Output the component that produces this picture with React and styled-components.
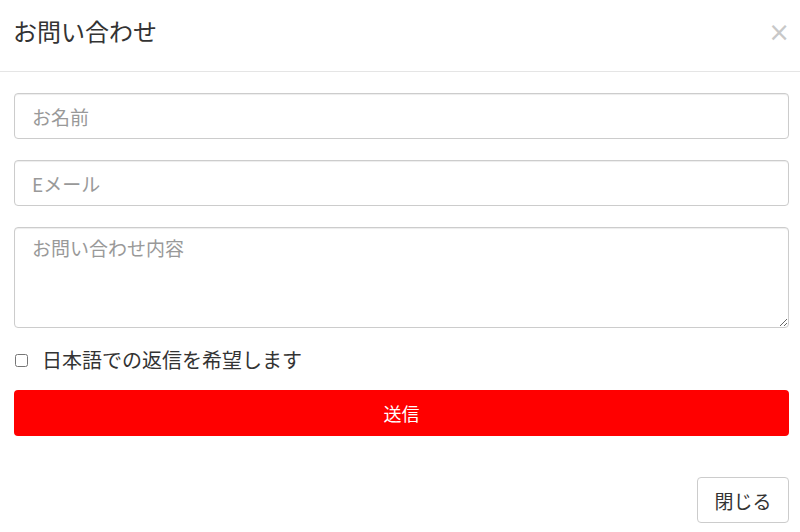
import React from 'react'
import styled, { createGlobalStyle } from 'styled-components'

const GlobalStyle = createGlobalStyle`
  html, body {
    margin: 0;
    padding: 0;
    background: #fff;
  }
  body {
    font-family: "Noto Sans CJK JP", "Noto Sans", sans-serif;
    color: #333;
  }
`

const Modal = styled.div`
  width: 800px;
  height: 532px;
  display: flex;
  flex-direction: column;
  box-sizing: border-box;
`

const Header = styled.div`
  height: 72px;
  box-sizing: border-box;
  display: flex;
  align-items: center;
  justify-content: space-between;
  padding: 0 10px 8px 13px;
  border-bottom: 1px solid #e5e5e5;
`

const Title = styled.h4`
  margin: 0;
  font-size: 24px;
  font-weight: 400;
  line-height: 1.2;
  color: #333;
`

const CloseX = styled.button`
  border: none;
  background: none;
  padding: 0;
  font-family: "DejaVu Sans", sans-serif;
  font-size: 26px;
  line-height: 1;
  color: #c8c8c8;
  cursor: pointer;
`

const Body = styled.form`
  display: flex;
  flex-direction: column;
  gap: 21px;
  padding: 21px 11px 0 14px;
`

const Field = styled.input`
  height: 46px;
  box-sizing: border-box;
  border: 1px solid #ccc;
  border-radius: 4px;
  padding: 0 17px;
  font-family: inherit;
  font-size: 19px;
  color: #555;
  box-shadow: inset 0 1px 1px rgba(0, 0, 0, 0.075);
  &::placeholder {
    color: #999;
  }
`

const Area = styled.textarea`
  height: 101px;
  box-sizing: border-box;
  border: 1px solid #ccc;
  border-radius: 4px;
  padding: 6px 17px;
  font-family: inherit;
  font-size: 19px;
  color: #555;
  box-shadow: inset 0 1px 1px rgba(0, 0, 0, 0.075);
  &::placeholder {
    color: #999;
  }
`

const CheckRow = styled.label`
  display: flex;
  align-items: center;
  gap: 14px;
  height: 26px;
  line-height: 26px;
  margin-top: -2px;
  font-size: 20px;
  color: #333;
`

const Check = styled.input`
  margin: 0 0 0 1px;
  width: 13px;
  height: 13px;
`

const Submit = styled.button`
  height: 46px;
  margin-top: -4px;
  border: none;
  border-radius: 4px;
  background: #ff0000;
  color: #fff;
  font-family: inherit;
  font-size: 18px;
  cursor: pointer;
`

const Footer = styled.div`
  margin-top: auto;
  display: flex;
  justify-content: flex-end;
  padding: 0 11px 9px 14px;
`

const Plain = styled.button`
  width: 92px;
  height: 46px;
  border: 1px solid #ccc;
  border-radius: 4px;
  background: #fff;
  color: #333;
  font-family: inherit;
  font-size: 19px;
  cursor: pointer;
`

const App = () => {
  return (
    <>
      <GlobalStyle />
      <Modal>
        <Header>
          <Title>お問い合わせ</Title>
          <CloseX type="button">×</CloseX>
        </Header>
        <Body onSubmit={e => e.preventDefault()}>
          <Field type="text" placeholder="お名前" />
          <Field type="email" placeholder="Eメール" />
          <Area placeholder="お問い合わせ内容" />
          <CheckRow>
            <Check type="checkbox" />
            日本語での返信を希望します
          </CheckRow>
          <Submit type="submit">送信</Submit>
        </Body>
        <Footer>
          <Plain type="button">閉じる</Plain>
        </Footer>
      </Modal>
    </>
  )
}

export default App
